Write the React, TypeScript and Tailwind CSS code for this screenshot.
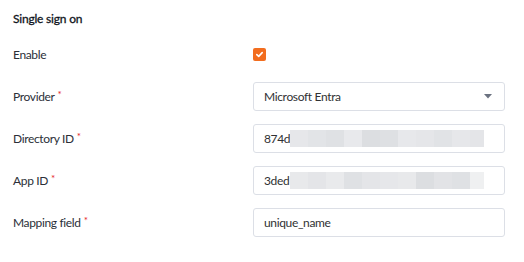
import React from "react";

type RowProps = {
  label: string;
  required?: boolean;
  children: React.ReactNode;
};

function Row({ label, required, children }: RowProps) {
  return (
    <div className="flex items-center h-[29px]">
      <div className="w-[240px] flex items-start text-[12px] leading-4 tracking-[-0.35px] text-[#2b2f38]">
        <span>{label}</span>
        {required && (
          <span className="ml-[3px] text-[10px] leading-[10px] text-[#e5252a]">*</span>
        )}
      </div>
      <div className="w-[252px] h-full flex items-center">{children}</div>
    </div>
  );
}

const dirBlur = ["#e6e7ea", "#e2e4e7", "#dfe1e4", "#e8e9ec", "#dcdee1", "#dee0e3", "#e7e8eb", "#e5e6e9", "#e1e3e6", "#e6e7ea", "#e4e5e8"];
const appBlur = ["#e8e9eb", "#e4e5e8", "#e9eaec", "#dfe1e4", "#e4e5e8", "#e6e7ea", "#e8e9eb", "#dcdee1", "#e2e3e6", "#dfe1e4", "#eff0f1"];

function TextBox({ value, blur }: { value: string; blur?: string[] }) {
  return (
    <div className="relative w-full h-full border border-[#dcdfe6] rounded-[3px] bg-white flex items-center pl-[10px] text-[12px] tracking-[-0.35px] text-[#303133]">
      <span>{value}</span>
      {blur && (
        <div className="absolute left-[36px] top-[5px] h-[17px] flex">
          {blur.map((c, i) => (
            <div key={i} className={i === blur.length - 1 ? "w-[14px] h-full" : "w-[18px] h-full"} style={{ background: c }} />
          ))}
        </div>
      )}
    </div>
  );
}

export default function App() {
  return (
    <div
      className="w-[524px] h-[262px] bg-white pl-[13px] pt-[10px] flex flex-col gap-[13px]"
      style={{ fontFamily: "Lato, 'Open Sans', sans-serif" }}
    >
      <div className="text-[12px] leading-[17px] tracking-[-0.2px] text-[#0f1420] [-webkit-text-stroke:0.3px_#0f1420]">Single sign on</div>
      <Row label="Enable">
        <div className="w-[13px] h-[13px] rounded-[2px] bg-[#f26d1f] flex items-center justify-center">
          <svg width="9" height="9" viewBox="0 0 9 9" fill="none">
            <path d="M1.8 4.6 L3.7 6.4 L7.2 2.6" stroke="white" strokeWidth="1.6" strokeLinecap="round" strokeLinejoin="round" />
          </svg>
        </div>
      </Row>
      <Row label="Provider" required>
        <div className="w-full h-full border border-[#dcdfe6] rounded-[3px] bg-white flex items-center justify-between pl-[10px] pr-[12px] text-[12px] tracking-[-0.35px] text-[#303133]">
          <span>Microsoft Entra</span>
          <svg width="8" height="5" viewBox="0 0 8 5">
            <path d="M0 0 H8 L4 4.5 Z" fill="#6b7280" />
          </svg>
        </div>
      </Row>
      <Row label="Directory ID" required>
        <TextBox value="874d" blur={dirBlur} />
      </Row>
      <Row label="App ID" required>
        <TextBox value="3ded" blur={appBlur} />
      </Row>
      <Row label="Mapping field" required>
        <TextBox value="unique_name" />
      </Row>
    </div>
  );
}
